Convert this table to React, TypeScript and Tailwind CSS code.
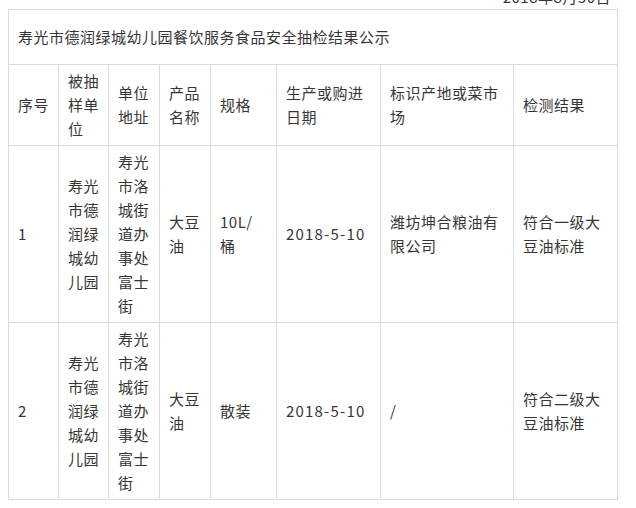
import React from "react";

type Row = {
	no: string;
	unit: string[];
	addr: string[];
	product: string[];
	spec: string[];
	date: string;
	origin: string[];
	result: string[];
};

const rows: Row[] = [
	{
		no: "1",
		unit: ["寿光", "市德", "润绿", "城幼", "儿园"],
		addr: ["寿光", "市洛", "城街", "道办", "事处", "富士", "街"],
		product: ["大豆", "油"],
		spec: ["10L/", "桶"],
		date: "2018-5-10",
		origin: ["潍坊坤合粮油有", "限公司"],
		result: ["符合一级大", "豆油标准"],
	},
	{
		no: "2",
		unit: ["寿光", "市德", "润绿", "城幼", "儿园"],
		addr: ["寿光", "市洛", "城街", "道办", "事处", "富士", "街"],
		product: ["大豆", "油"],
		spec: ["散装"],
		date: "2018-5-10",
		origin: ["/"],
		result: ["符合二级大", "豆油标准"],
	},
];

const headers: string[][] = [
	["序号"],
	["被抽", "样单", "位"],
	["单位", "地址"],
	["产品", "名称"],
	["规格"],
	["生产或购进", "日期"],
	["标识产地或菜市", "场"],
	["检测结果"],
];

const Lines: React.FC<{ lines: string[] }> = ({ lines }) => (
	<>
		{lines.map((l, i) => (
			<div key={i} className="whitespace-nowrap">
				{l}
			</div>
		))}
	</>
);

const cell = "border border-[#dcdcdc] px-[9px] py-[4px] align-middle text-left";

export default function App() {
	return (
		<div className="w-[636px] h-[508px] overflow-hidden bg-white text-[#363636] text-[15px] leading-[24px] tracking-[0.5px] font-['Noto_Sans_CJK_SC','Microsoft_YaHei',sans-serif]">
			<div className="pl-[8px] w-[617px]">
				<div className="h-[24px] mt-[-15px] pr-[6px] text-right">2018年8月30日</div>
				<table className="w-[609px] table-fixed border-collapse">
					<colgroup>
						<col className="w-[50px]" />
						<col className="w-[50px]" />
						<col className="w-[51px]" />
						<col className="w-[51px]" />
						<col className="w-[66px]" />
						<col className="w-[104px]" />
						<col className="w-[133px]" />
						<col className="w-[104px]" />
					</colgroup>
					<tbody>
						<tr>
							<td colSpan={8} className={`${cell} h-[55px]`}>
								寿光市德润绿城幼儿园餐饮服务食品安全抽检结果公示
							</td>
						</tr>
						<tr>
							{headers.map((h, i) => (
								<td key={i} className={cell}>
									<Lines lines={h} />
								</td>
							))}
						</tr>
						{rows.map((r) => (
							<tr key={r.no}>
								<td className={cell}>{r.no}</td>
								<td className={cell}>
									<Lines lines={r.unit} />
								</td>
								<td className={cell}>
									<Lines lines={r.addr} />
								</td>
								<td className={cell}>
									<Lines lines={r.product} />
								</td>
								<td className={cell}>
									<Lines lines={r.spec} />
								</td>
								<td className={`${cell} tracking-[1.2px] whitespace-nowrap`}>{r.date}</td>
								<td className={cell}>
									<Lines lines={r.origin} />
								</td>
								<td className={cell}>
									<Lines lines={r.result} />
								</td>
							</tr>
						))}
					</tbody>
				</table>
			</div>
		</div>
	);
}
